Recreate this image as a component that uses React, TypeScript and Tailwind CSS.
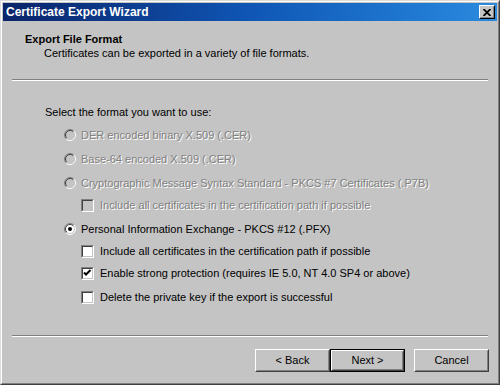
import React from 'react'

const face = '#c4c4c4'

function Radio({ checked = false, disabled = false }: { checked?: boolean; disabled?: boolean }) {
  return (
    <svg width="12" height="12" viewBox="0 0 12 12" className="shrink-0">
      <circle cx="6" cy="6" r="5" fill={disabled ? face : '#ffffff'} />
      <path d="M2.1 9.9 A5.5 5.5 0 0 1 9.9 2.1" stroke="#808080" strokeWidth="1" fill="none" />
      <path d="M9.9 2.1 A5.5 5.5 0 0 1 2.1 9.9" stroke="#ffffff" strokeWidth="1" fill="none" />
      <path d="M2.8 9.2 A4.5 4.5 0 0 1 9.2 2.8" stroke="#404040" strokeWidth="1" fill="none" />
      <path d="M9.2 2.8 A4.5 4.5 0 0 1 2.8 9.2" stroke={face} strokeWidth="1" fill="none" />
      {checked && <circle cx="6" cy="6" r="2" fill="#000000" />}
    </svg>
  )
}

function Check({ checked = false, disabled = false }: { checked?: boolean; disabled?: boolean }) {
  return (
    <span
      className={`w-[13px] h-[13px] shrink-0 border border-t-[#808080] border-l-[#808080] border-r-white border-b-white ${disabled ? 'bg-[#c4c4c4]' : 'bg-white'}`}
    >
      <span className="block w-[11px] h-[11px] border border-t-[#404040] border-l-[#404040] border-r-[#c4c4c4] border-b-[#c4c4c4]">
        {checked && (
          <svg width="9" height="9" viewBox="0 0 9 9" className="block">
            <path d="M1 3.5 L3 5.5 L7.5 1" stroke="#000000" strokeWidth="2" fill="none" />
          </svg>
        )}
      </span>
    </span>
  )
}

function Label({ children, disabled = false }: { children: React.ReactNode; disabled?: boolean }) {
  return (
    <span className={disabled ? 'text-[#808080] [text-shadow:1px_1px_0_#ffffff]' : 'text-black'}>{children}</span>
  )
}

function Button({ children, isDefault = false }: { children: React.ReactNode; isDefault?: boolean }) {
  const inner = (
    <div className="h-full border border-t-white border-l-white border-r-[#404040] border-b-[#404040]">
      <div className="h-full flex items-center justify-center border border-t-[#c4c4c4] border-l-[#c4c4c4] border-r-[#808080] border-b-[#808080]">
        {children}
      </div>
    </div>
  )
  return (
    <div className={`w-[75px] h-[23px] ${isDefault ? 'border border-black' : ''}`}>{inner}</div>
  )
}

export default function App() {
  return (
    <div
      className="w-[500px] h-[385px] bg-[#c4c4c4] text-[11px] leading-[13px] text-black border border-t-[#dcdcdc] border-l-[#dcdcdc] border-r-[#404040] border-b-[#404040]"
      style={{ fontFamily: '"Liberation Sans", Arial, sans-serif' }}
    >
      <div className="h-full flex flex-col p-px border border-t-white border-l-white border-r-[#808080] border-b-[#808080]">
        {/* title bar */}
        <div className="h-[18px] shrink-0 flex items-center justify-between pl-[3px] pr-[2px] bg-gradient-to-r from-[#0a246a] via-[#0f56b5] to-[#2a8ade]">
          <span className="text-white font-bold text-[12px]">Certificate Export Wizard</span>
          <div className="w-[16px] h-[14px] border border-t-white border-l-white border-r-black border-b-black bg-[#c4c4c4]">
            <div className="w-full h-full flex items-center justify-center border border-t-[#c4c4c4] border-l-[#c4c4c4] border-r-[#808080] border-b-[#808080]">
              <svg width="8" height="7" viewBox="0 0 8 7">
                <path d="M0.5 0 L7.5 7 M7.5 0 L0.5 7" stroke="#000000" strokeWidth="1.8" />
              </svg>
            </div>
          </div>
        </div>

        {/* header */}
        <div className="h-[58px] shrink-0 pt-[12px]">
          <div className="pl-[22px] font-bold">Export File Format</div>
          <div className="pl-[41px] mt-px">Certificates can be exported in a variety of file formats.</div>
        </div>
        <div className="mx-[9px] h-[2px] shrink-0 border-t border-t-[#808080] border-b border-b-white" />

        {/* body */}
        <div className="flex-1 pt-[25px] pl-[42px]">
          <div>Select the format you want to use:</div>
          <div className="pl-[19px]">
            <div className="h-[20px] mt-[6px] flex items-center gap-[5px]">
              <Radio disabled />
              <Label disabled>DER encoded binary X.509 (.CER)</Label>
            </div>
            <div className="h-[20px] mt-[4px] flex items-center gap-[5px]">
              <Radio disabled />
              <Label disabled>Base-64 encoded X.509 (.CER)</Label>
            </div>
            <div className="h-[20px] mt-[4px] flex items-center gap-[5px]">
              <Radio disabled />
              <Label disabled>Cryptographic Message Syntax Standard - PKCS #7 Certificates (.P7B)</Label>
            </div>
            <div className="h-[20px] mt-[2px] pl-[17px] flex items-center gap-[6px]">
              <Check disabled />
              <Label disabled>Include all certificates in the certification path if possible</Label>
            </div>
            <div className="h-[20px] mt-[4px] flex items-center gap-[5px]">
              <Radio checked />
              <Label>Personal Information Exchange - PKCS #12 (.PFX)</Label>
            </div>
            <div className="h-[20px] mt-[2px] pl-[17px] flex items-center gap-[6px]">
              <Check />
              <Label>Include all certificates in the certification path if possible</Label>
            </div>
            <div className="h-[20px] mt-[2px] pl-[17px] flex items-center gap-[6px]">
              <Check checked />
              <Label>Enable strong protection (requires IE 5.0, NT 4.0 SP4 or above)</Label>
            </div>
            <div className="h-[20px] mt-[4px] pl-[17px] flex items-center gap-[6px]">
              <Check />
              <Label>Delete the private key if the export is successful</Label>
            </div>
          </div>
        </div>

        {/* footer */}
        <div className="mx-[9px] h-[2px] shrink-0 border-t border-t-[#808080] border-b border-b-white" />
        <div className="h-[45px] shrink-0 flex justify-end items-start pt-[12px] pr-[8px]">
          <Button>&lt; Back</Button>
          <Button isDefault>Next &gt;</Button>
          <div className="w-[9px]" />
          <Button>Cancel</Button>
        </div>
      </div>
    </div>
  )
}
